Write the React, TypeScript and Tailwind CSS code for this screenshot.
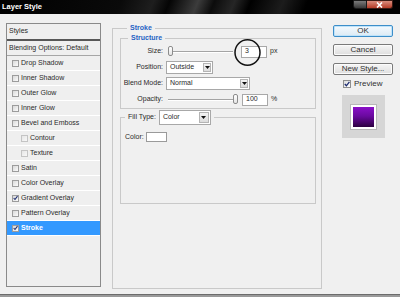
import React from "react";

function Check({ checked, light, big }: { checked?: boolean; light?: boolean; big?: boolean }) {
  return (
    <span
      className={
        big
          ? "flex h-[8px] w-[8px] shrink-0 items-center justify-center border border-[#8e8f8f] bg-[linear-gradient(135deg,#dcdcdc,#ffffff)]"
          : light
          ? "flex h-[7px] w-[7px] shrink-0 items-center justify-center border border-[#c4c4c4] bg-[linear-gradient(135deg,#e6e6e6,#f8f8f8)]"
          : "flex h-[7px] w-[7px] shrink-0 items-center justify-center border border-[#9c9c9c] bg-[linear-gradient(135deg,#d9d9d9,#fbfbfb)]"
      }
    >
      {checked && (
        <svg width="6" height="6" viewBox="0 0 6 6">
          <path d="M0.8 3 L2.4 4.8 L5.4 0.8" stroke="#1c2c70" strokeWidth="1.3" fill="none" />
        </svg>
      )}
    </span>
  );
}

function Arrow() {
  return (
    <span className="ml-auto mr-[1px] flex h-[9px] w-[8px] items-center justify-center border border-[#b4b4b4] bg-[linear-gradient(#f4f4f4,#dcdcdc)]">
      <svg width="5" height="3" viewBox="0 0 5 3">
        <path d="M0 0 L5 0 L2.5 3 Z" fill="#111" />
      </svg>
    </span>
  );
}

const items: { label: string; indent?: boolean; checked?: boolean; selected?: boolean }[] = [
  { label: "Drop Shadow" },
  { label: "Inner Shadow" },
  { label: "Outer Glow" },
  { label: "Inner Glow" },
  { label: "Bevel and Emboss" },
  { label: "Contour", indent: true },
  { label: "Texture", indent: true },
  { label: "Satin" },
  { label: "Color Overlay" },
  { label: "Gradient Overlay", checked: true },
  { label: "Pattern Overlay" },
  { label: "Stroke", checked: true, selected: true },
];

export default function App() {
  return (
    <div className="flex h-[297px] w-[400px] flex-col overflow-hidden bg-[#f0f0f0] font-['Liberation_Sans',Arial,sans-serif] text-[#2a2a2a]">
      {/* Title bar */}
      <div className="flex h-[14px] shrink-0 items-center bg-[linear-gradient(112deg,#000_0%,#0a0a0a_30%,#1e1e1e_38%,#050505_42%,#3c3c3c_49%,#0c0c0c_53%,#262626_58%,#000_62%,#1c1c1c_70%,#000_76%,#000_100%)]">
        <span className="ml-[2px] text-[7.5px] font-bold leading-none text-white">Layer Style</span>
        <div className="ml-auto mr-[7px] flex h-[9px] self-start">
          <div className="w-[14px] rounded-bl-[3px] border border-[#1a1a1a] bg-[linear-gradient(#7a7a7a,#3a3a3a)]" />
          <div className="flex w-[26px] items-center justify-center rounded-br-[3px] border border-l-0 border-[#3a1a14] bg-[linear-gradient(#d98c7c,#b63c28)]">
            <svg width="7" height="6" viewBox="0 0 7 6">
              <path d="M1 0.5 L6 5.5 M6 0.5 L1 5.5" stroke="#fff" strokeWidth="1.6" />
            </svg>
          </div>
        </div>
      </div>

      {/* Body */}
      <div className="flex h-[281px] shrink-0 items-start border-b border-[#6c6c6c] pl-[6px] pt-[9px]">
        {/* Left list */}
        <div className="h-[264px] w-[95px] shrink-0 overflow-hidden border border-[#8a8a8a] bg-[#efefef] text-[7px]">
          <div className="flex h-[17px] items-center border-b-2 border-[#575757] pl-[2px]">Styles</div>
          <div className="flex h-[15px] items-center border-b border-[#a6a6a6] pl-[2px]">Blending Options: Default</div>
          {items.map((it) => (
            <div
              key={it.label}
              className={
                it.selected
                  ? "flex h-[15px] items-center gap-[2px] border-b border-white bg-[#3399ff] pl-[5px] font-bold text-white"
                  : it.indent
                  ? "flex h-[15px] items-center gap-[2px] border-b border-white pl-[14px]"
                  : "flex h-[15px] items-center gap-[2px] border-b border-white pl-[5px]"
              }
            >
              <Check checked={it.checked} light={it.indent} />
              <span>{it.label}</span>
            </div>
          ))}
        </div>

        {/* Middle */}
        <fieldset className="ml-[11px] w-[210px] shrink-0 border border-[#c9c9c9] pl-[7px] pr-[5px] text-[7px]">
          <legend className="ml-[7px] px-[3px] text-[7px] font-bold leading-[10px] text-[#1e62c4]">Stroke</legend>

          <fieldset className="border border-[#c9c9c9] pb-[2px] pt-[2px]">
            <legend className="ml-[7px] px-[3px] text-[7px] font-bold leading-[10px] text-[#1e62c4]">Structure</legend>
            <div className="flex flex-col gap-[3px]">
              {/* Size */}
              <div className="flex h-[13px] items-center">
                <span className="w-[42px] text-right">Size:</span>
                <div className="relative ml-[5px] flex h-[13px] w-[65px] items-center">
                  <div className="h-[2px] w-full border-t border-b border-t-[#a4a4a4] border-b-white" />
                  <div className="absolute left-0 top-[1px] h-[10px] w-[5px] rounded-[2px] border border-[#8c8c8c] bg-[linear-gradient(#ffffff,#e4e4e4)]" />
                </div>
                <div className="relative ml-[8px] flex h-[12px] w-[26px] items-center border border-[#a8a8a8] bg-white pl-[3px]">
                  3
                  <svg className="absolute left-[-8px] top-[-8px]" width="27" height="27" viewBox="0 0 27 27">
                    <ellipse cx="13.5" cy="13.5" rx="12.5" ry="12.7" fill="none" stroke="#111" strokeWidth="1.5" />
                  </svg>
                </div>
                <span className="ml-[3px]">px</span>
              </div>
              {/* Position */}
              <div className="flex h-[13px] items-center">
                <span className="w-[42px] text-right">Position:</span>
                <div className="ml-[3px] flex h-[13px] w-[47px] items-center border border-[#a8a8a8] bg-white pl-[3px]">
                  <span>Outside</span>
                  <Arrow />
                </div>
              </div>
              {/* Blend Mode */}
              <div className="flex h-[13px] items-center">
                <span className="w-[42px] text-right">Blend Mode:</span>
                <div className="ml-[3px] flex h-[13px] w-[84px] items-center border border-[#a8a8a8] bg-white pl-[3px]">
                  <span>Normal</span>
                  <Arrow />
                </div>
              </div>
              {/* Opacity */}
              <div className="flex h-[13px] items-center">
                <span className="w-[42px] text-right">Opacity:</span>
                <div className="relative ml-[5px] flex h-[13px] w-[70px] items-center">
                  <div className="h-[2px] w-full border-t border-b border-t-[#a4a4a4] border-b-white" />
                  <div className="absolute right-0 top-[1px] h-[10px] w-[5px] rounded-[2px] border border-[#8c8c8c] bg-[linear-gradient(#ffffff,#e4e4e4)]" />
                </div>
                <div className="ml-[4px] flex h-[12px] w-[26px] items-center border border-[#a8a8a8] bg-white pl-[3px]">100</div>
                <span className="ml-[3px]">%</span>
              </div>
            </div>
          </fieldset>

          <fieldset className="mt-[1px] border border-[#c9c9c9]">
            <legend className="ml-[4px] px-[3px]">
              <span className="flex items-center gap-[3px]">
                <span>Fill Type:</span>
                <span className="flex h-[15px] w-[52px] items-center border border-[#a8a8a8] bg-white pl-[3px]">
                  <span>Color</span>
                  <span className="ml-auto mr-[1px] flex h-[11px] w-[10px] items-center justify-center border border-[#b4b4b4] bg-[linear-gradient(#f4f4f4,#dcdcdc)]">
                    <svg width="5" height="3" viewBox="0 0 5 3">
                      <path d="M0 0 L5 0 L2.5 3 Z" fill="#111" />
                    </svg>
                  </span>
                </span>
              </span>
            </legend>
            <div className="h-[78px] pl-[4px] pt-[7px]">
              <div className="flex items-center gap-[2px]">
                <span>Color:</span>
                <span className="h-[10px] w-[21px] border border-[#9a9a9a] bg-white" />
              </div>
            </div>
          </fieldset>
          <div className="h-[84px]" />
        </fieldset>

        {/* Right column */}
        <div className="ml-[11px] mt-[2px] flex w-[60px] shrink-0 flex-col items-center text-[8px] text-[#303030]">
          <button className="flex h-[12px] w-full items-center justify-center rounded-[2px] border border-[#3d8ec9] bg-[linear-gradient(#f4fafe,#dceaf4)] leading-none shadow-[inset_0_0_0_1px_#bfe3fa]">
            OK
          </button>
          <button className="mt-[7px] flex h-[12px] w-full items-center justify-center rounded-[2px] border border-[#7a7a7a] bg-[linear-gradient(#f6f6f6,#dedede)] leading-none shadow-[inset_0_0_0_1px_#fcfcfc]">
            Cancel
          </button>
          <button className="mt-[7px] flex h-[12px] w-full items-center justify-center rounded-[2px] border border-[#7a7a7a] bg-[linear-gradient(#f6f6f6,#dedede)] leading-none shadow-[inset_0_0_0_1px_#fcfcfc]">
            New Style...
          </button>
          <div className="mt-[4px] flex h-[9px] items-center gap-[3px] self-start pl-[10px]">
            <Check checked big />
            <span className="leading-none">Preview</span>
          </div>
          <div className="mt-[7px] flex h-[43px] w-[43px] items-center justify-center bg-[#d6d6d6]">
            <div className="h-[24px] w-[25px] border-2 border-white bg-[linear-gradient(#8a10c8,#6a0aa0_45%,#2c0040)] shadow-[0_0_0_1px_#b8b8b8]" />
          </div>
        </div>
      </div>
      <div className="h-[2px] bg-[#9a9a9a]" />
    </div>
  );
}
